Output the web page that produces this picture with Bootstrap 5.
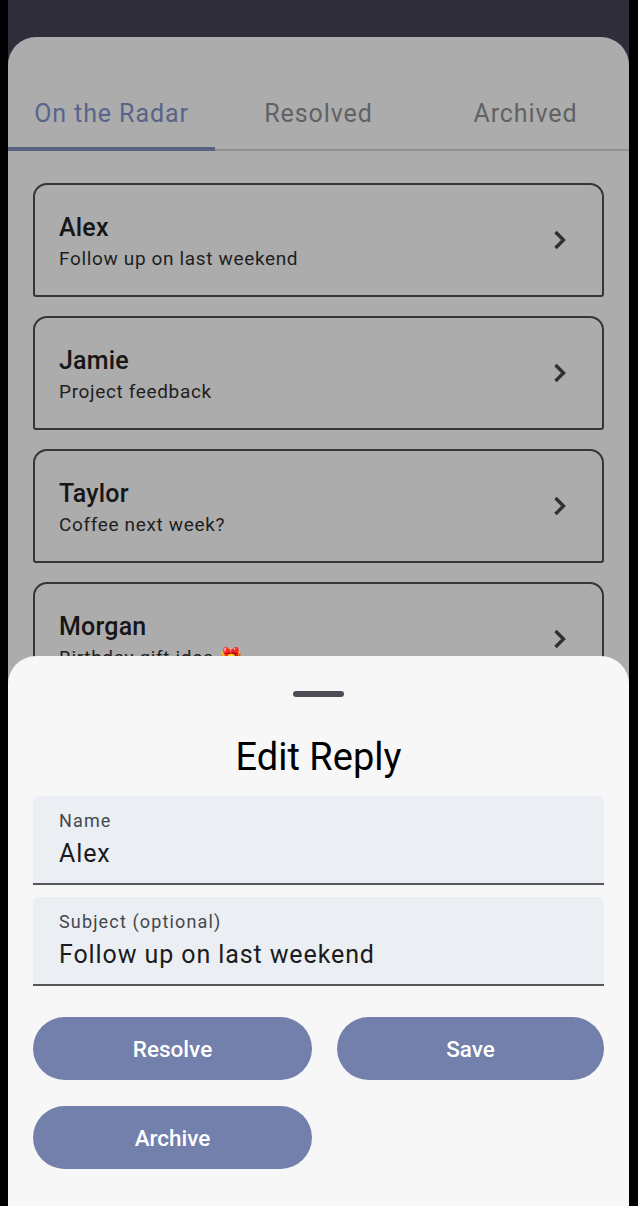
<!doctype html>
<html><head><meta charset="utf-8">
<link href="https://cdn.jsdelivr.net/npm/bootstrap@5.3.0/dist/css/bootstrap.min.css" rel="stylesheet">
<style>
html,body{height:100%;margin:0;background:#000;overflow:hidden}
body{font-family:Roboto,"Noto Sans",sans-serif}
.phone-shell{position:relative;width:621px;height:1206px;margin-left:8px;background:#2f2d3a;overflow:hidden}
.back-sheet{height:1169px;margin-top:37px;background:#acacac;border-radius:28px 28px 0 0}
.tab-strip{padding-top:47px;border-bottom:2px solid #8f8f91;height:114px}
.tab-item{flex:1 1 0;height:65px;text-align:center;font-size:25px;letter-spacing:.9px;line-height:60px;color:#626265;position:relative}
.tab-item.is-on{color:#59648a}
.tab-item.is-on::after{content:"";position:absolute;left:0;right:0;bottom:-2px;height:4px;background:#56627f}
.reply-list{padding:32px 25px 0;gap:19px}
.reply-card{height:114px;border:2px solid #36363a;border-radius:14px 14px 3px 3px;padding:0 35px 0 24px}
.reply-name{font-size:25px;line-height:30px;font-weight:500;color:#161618;letter-spacing:.2px;margin-top:4px}
.reply-sub{font-size:19px;line-height:24px;color:#1e1e20;letter-spacing:.65px;margin-top:4px}
.front-sheet{position:absolute;left:0;right:0;bottom:0;height:550px;background:#f7f7f8;border-radius:28px 28px 0 0;padding:0 25px}
.drag-bar{width:51px;height:6px;border-radius:3px;background:#4d4d55;margin:35px auto 0}
.sheet-title{font-size:38px;line-height:44px;font-weight:400;color:#000;text-align:center;margin:38px 0 17px}
.fill-field{height:89px;background:#ebeef3;border-radius:6px 6px 0 0;border-bottom:2px solid #55555c;padding:14px 26px 0;margin-bottom:12px}
.fill-label{font-size:18px;line-height:22px;letter-spacing:1.15px;color:#44474f}
.fill-value{font-size:25px;line-height:32px;letter-spacing:.9px;color:#1b1b20;margin-top:6px}
.pill-btn{height:63px;border-radius:32px;background:#7280ab;border:0;color:#fff;font-size:22.5px;font-weight:500;padding:2px 0 0}
.pill-btn:hover{background:#7280ab;color:#fff}
.btn-wrap{gap:25px;margin-top:31px}
.btn-wrap+.btn-wrap{margin-top:26px}
.w-left{width:279px}
.w-right{width:267px}
</style></head><body>
<div class="phone-shell">
 <div class="back-sheet">
  <div class="tab-strip d-flex">
   <div class="tab-item is-on">On the Radar</div><div class="tab-item">Resolved</div><div class="tab-item">Archived</div>
  </div>
  <div class="reply-list d-flex flex-column">
   <div class="reply-card d-flex align-items-center justify-content-between"><div><div class="reply-name">Alex</div><div class="reply-sub">Follow up on last weekend</div></div><svg width="14" height="20" viewBox="0 0 14 20"><path d="M2.5 2 L10.5 10 L2.5 18" fill="none" stroke="#303034" stroke-width="3.4"/></svg></div>
   <div class="reply-card d-flex align-items-center justify-content-between"><div><div class="reply-name">Jamie</div><div class="reply-sub">Project feedback</div></div><svg width="14" height="20" viewBox="0 0 14 20"><path d="M2.5 2 L10.5 10 L2.5 18" fill="none" stroke="#303034" stroke-width="3.4"/></svg></div>
   <div class="reply-card d-flex align-items-center justify-content-between"><div><div class="reply-name">Taylor</div><div class="reply-sub">Coffee next week?</div></div><svg width="14" height="20" viewBox="0 0 14 20"><path d="M2.5 2 L10.5 10 L2.5 18" fill="none" stroke="#303034" stroke-width="3.4"/></svg></div>
   <div class="reply-card d-flex align-items-center justify-content-between"><div><div class="reply-name">Morgan</div><div class="reply-sub">Birthday gift idea 🎁</div></div><svg width="14" height="20" viewBox="0 0 14 20"><path d="M2.5 2 L10.5 10 L2.5 18" fill="none" stroke="#303034" stroke-width="3.4"/></svg></div>
  </div>
 </div>
 <div class="front-sheet">
  <div class="drag-bar"></div>
  <h2 class="sheet-title">Edit Reply</h2>
  <div class="fill-field"><div class="fill-label">Name</div><div class="fill-value">Alex</div></div>
  <div class="fill-field"><div class="fill-label">Subject (optional)</div><div class="fill-value">Follow up on last weekend</div></div>
  <div class="d-flex btn-wrap"><button class="btn pill-btn w-left">Resolve</button><button class="btn pill-btn w-right">Save</button></div>
  <div class="d-flex btn-wrap"><button class="btn pill-btn w-left">Archive</button></div>
 </div>
</div>
<script src="https://cdn.jsdelivr.net/npm/bootstrap@5.3.0/dist/js/bootstrap.bundle.min.js"></script>
</body></html>
